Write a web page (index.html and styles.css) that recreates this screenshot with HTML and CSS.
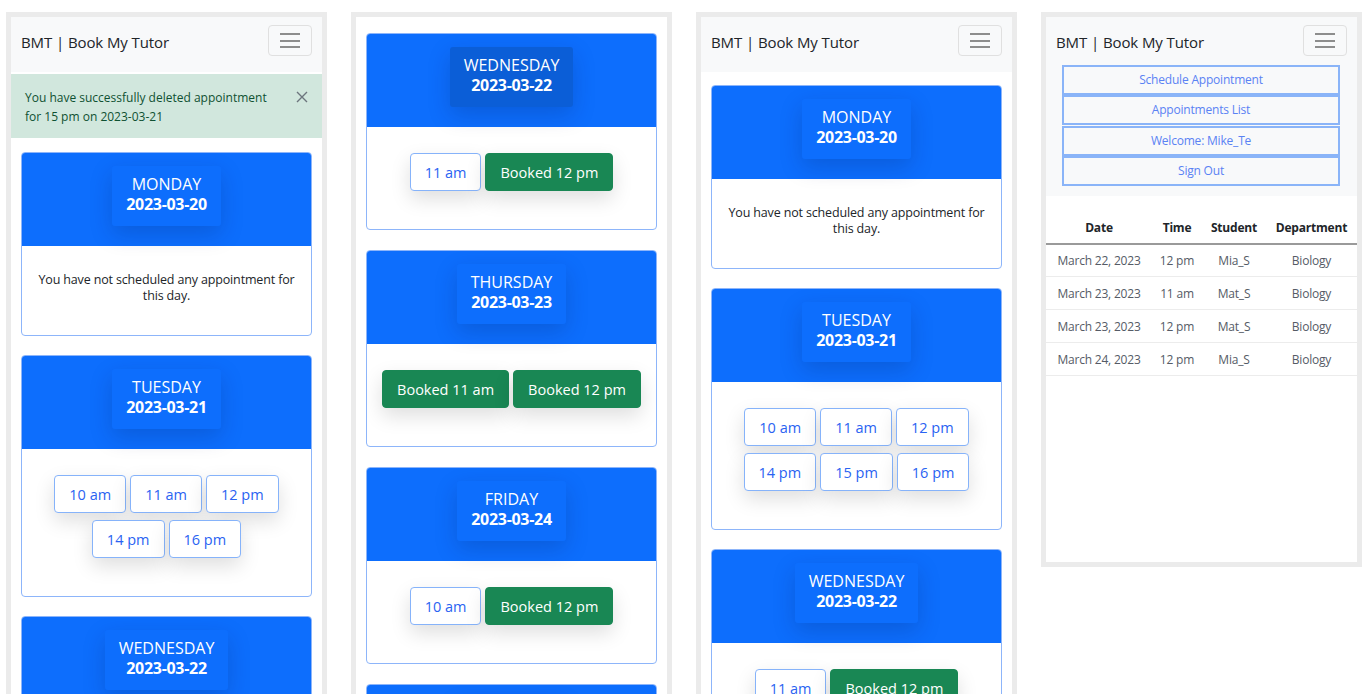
FILE: index.html
```html
<!DOCTYPE html>
<html lang="en">
<head>
<meta charset="utf-8">
<title>BMT | Book My Tutor</title>
<link rel="stylesheet" href="styles.css">
</head>
<body>
<div class="screens">

  <!-- Screen 1 -->
  <section class="phone">
    <nav class="navbar">
      <div class="nav-row">
        <span class="brand">BMT | Book My Tutor</span>
        <button class="toggler" aria-label="menu"><span></span><span></span><span></span></button>
      </div>
    </nav>
    <div class="alert">
      <p class="alert-text">You have successfully deleted appointment for 15 pm on 2023-03-21</p>
      <button class="alert-close" aria-label="close">
        <svg width="12" height="12" viewBox="0 0 12 12"><path d="M1 1 L11 11 M11 1 L1 11" stroke="#6c757d" stroke-width="1.4" fill="none"/></svg>
      </button>
    </div>
    <div class="cards">
      <div class="day-card">
        <div class="day-head"><div class="day-label"><div class="day-name">MONDAY</div><div class="day-date">2023-03-20</div></div></div>
        <div class="day-body empty"><p>You have not scheduled any appointment for this day.</p></div>
      </div>
      <div class="day-card">
        <div class="day-head"><div class="day-label"><div class="day-name">TUESDAY</div><div class="day-date">2023-03-21</div></div></div>
        <div class="day-body">
          <div class="slots">
            <button class="slot">10 am</button><button class="slot">11 am</button><button class="slot">12 pm</button><button class="slot">14 pm</button><button class="slot">16 pm</button>
          </div>
        </div>
      </div>
      <div class="day-card">
        <div class="day-head"><div class="day-label"><div class="day-name">WEDNESDAY</div><div class="day-date">2023-03-22</div></div></div>
        <div class="day-body">
          <div class="slots"><button class="slot">11 am</button><button class="slot booked">Booked 12 pm</button></div>
        </div>
      </div>
    </div>
  </section>

  <!-- Screen 2 -->
  <section class="phone">
    <div class="cards cards-top">
      <div class="day-card">
        <div class="day-head"><div class="day-label active"><div class="day-name">WEDNESDAY</div><div class="day-date">2023-03-22</div></div></div>
        <div class="day-body">
          <div class="slots"><button class="slot">11 am</button><button class="slot booked">Booked 12 pm</button></div>
        </div>
      </div>
      <div class="day-card">
        <div class="day-head"><div class="day-label"><div class="day-name">THURSDAY</div><div class="day-date">2023-03-23</div></div></div>
        <div class="day-body">
          <div class="slots"><button class="slot booked">Booked 11 am</button><button class="slot booked">Booked 12 pm</button></div>
        </div>
      </div>
      <div class="day-card">
        <div class="day-head"><div class="day-label"><div class="day-name">FRIDAY</div><div class="day-date">2023-03-24</div></div></div>
        <div class="day-body">
          <div class="slots"><button class="slot">10 am</button><button class="slot booked">Booked 12 pm</button></div>
        </div>
      </div>
      <div class="day-card">
        <div class="day-head"><div class="day-label"><div class="day-name">SATURDAY</div><div class="day-date">2023-03-25</div></div></div>
      </div>
    </div>
  </section>

  <!-- Screen 3 -->
  <section class="phone">
    <nav class="navbar">
      <div class="nav-row">
        <span class="brand">BMT | Book My Tutor</span>
        <button class="toggler" aria-label="menu"><span></span><span></span><span></span></button>
      </div>
    </nav>
    <div class="cards cards-nav">
      <div class="day-card">
        <div class="day-head"><div class="day-label"><div class="day-name">MONDAY</div><div class="day-date">2023-03-20</div></div></div>
        <div class="day-body empty"><p>You have not scheduled any appointment for this day.</p></div>
      </div>
      <div class="day-card">
        <div class="day-head"><div class="day-label"><div class="day-name">TUESDAY</div><div class="day-date">2023-03-21</div></div></div>
        <div class="day-body">
          <div class="slots">
            <button class="slot">10 am</button><button class="slot">11 am</button><button class="slot">12 pm</button><button class="slot">14 pm</button><button class="slot">15 pm</button><button class="slot">16 pm</button>
          </div>
        </div>
      </div>
      <div class="day-card">
        <div class="day-head"><div class="day-label"><div class="day-name">WEDNESDAY</div><div class="day-date">2023-03-22</div></div></div>
        <div class="day-body">
          <div class="slots"><button class="slot">11 am</button><button class="slot booked">Booked 12 pm</button></div>
        </div>
      </div>
    </div>
  </section>

  <!-- Screen 4 -->
  <section class="phone phone-short">
    <nav class="navbar navbar-open">
      <div class="nav-row">
        <span class="brand">BMT | Book My Tutor</span>
        <button class="toggler" aria-label="menu"><span></span><span></span><span></span></button>
      </div>
      <div class="menu">
        <a class="menu-item">Schedule Appointment</a>
        <a class="menu-item">Appointments List</a>
        <a class="menu-item">Welcome: Mike_Te</a>
        <a class="menu-item">Sign Out</a>
      </div>
    </nav>
    <table class="appts">
      <colgroup><col class="c-date"><col class="c-time"><col class="c-student"><col class="c-dept"></colgroup>
      <thead><tr><th>Date</th><th>Time</th><th>Student</th><th>Department</th></tr></thead>
      <tbody>
        <tr><td>March 22, 2023</td><td>12 pm</td><td>Mia_S</td><td>Biology</td></tr>
        <tr><td>March 23, 2023</td><td>11 am</td><td>Mat_S</td><td>Biology</td></tr>
        <tr><td>March 23, 2023</td><td>12 pm</td><td>Mat_S</td><td>Biology</td></tr>
        <tr><td>March 24, 2023</td><td>12 pm</td><td>Mia_S</td><td>Biology</td></tr>
      </tbody>
    </table>
  </section>

</div>
</body>
</html>
```

FILE: styles.css
```css
* { box-sizing: border-box; }

html, body {
  margin: 0;
  height: 694px;
  overflow: hidden;
  background: #ffffff;
  font-family: "Open Sans", "Noto Sans", "DejaVu Sans", sans-serif;
  color: #212529;
}

.screens {
  display: flex;
  align-items: flex-start;
  gap: 24px;
  padding: 12px 0 0 6px;
}

.phone {
  flex: none;
  width: 321px;
  height: 720px;
  border: 5px solid #ebebeb;
  background: #ffffff;
  overflow: hidden;
}

.phone-short {
  height: 555px;
}

/* navbar */
.navbar {
  background: #f8f9fa;
  padding: 8px 10px 0 10px;
  height: 55px;
}

.navbar-open {
  height: auto;
  padding-bottom: 10px;
}

.nav-row {
  display: flex;
  justify-content: space-between;
  align-items: center;
}

.brand {
  font-size: 15px;
  color: #212529;
  padding-top: 3px;
  letter-spacing: -0.1px;
}

.toggler {
  width: 44px;
  height: 31px;
  border: 1px solid #e0e0e0;
  border-radius: 4px;
  background: transparent;
  display: flex;
  flex-direction: column;
  align-items: center;
  justify-content: center;
  gap: 4.5px;
  padding: 0;
}

.toggler span {
  display: block;
  width: 20px;
  height: 2px;
  background: #8d8d8d;
}

.menu {
  margin: 9px 7px 0 6px;
  display: flex;
  flex-direction: column;
}

.menu-item {
  display: block;
  height: 30px;
  line-height: 26px;
  border: 2px solid #8ab4f8;
  text-align: center;
  font-size: 12px;
  color: #5a82f4;
  background: #f8f9fa;
  letter-spacing: -0.2px;
}

.menu-item + .menu-item {
  margin-top: 0.3px;
}

/* alert */
.alert {
  margin-top: 2px;
  background: #d1e7dd;
  padding: 14px 14px 12px 14px;
  display: flex;
  align-items: flex-start;
  gap: 22px;
}

.alert-text {
  margin: 0;
  flex: 1;
  font-size: 12px;
  line-height: 19px;
  color: #0f5132;
}

.alert-close {
  border: 0;
  background: transparent;
  padding: 0;
  width: 12px;
  height: 12px;
  margin-top: 3px;
  display: flex;
}

/* cards */
.cards {
  padding: 14px 10px 0 10px;
  display: flex;
  flex-direction: column;
  gap: 19px;
}

.cards-top { padding-top: 16px; gap: 20px; }
.cards-nav { padding-top: 13px; }

.day-card {
  border: 1px solid #8db5fa;
  border-radius: 4px;
  background: #ffffff;
  overflow: hidden;
}

.day-head {
  background: #0d6efd;
  padding: 13px 0 20px;
  display: flex;
  justify-content: center;
}

.day-label {
  background: #0d6efd;
  border-radius: 3px;
  padding: 8px 14px 12px;
  text-align: center;
  color: #ffffff;
  line-height: 20px;
  box-shadow: 0 8px 22px rgba(0, 30, 100, 0.22);
}

.day-label.active {
  background: #0b5ed7;
}

.day-name {
  font-size: 16px;
  letter-spacing: 0;
}

.day-date {
  font-size: 16px;
  font-weight: 700;
  letter-spacing: -0.3px;
}

.day-body {
  padding: 26px 10px 38px;
}

.day-body.empty {
  padding: 26px 10px 31px;
}

.day-body.empty p {
  margin: 0;
  text-align: center;
  font-size: 12.5px;
  line-height: 16px;
  color: #212529;
  letter-spacing: -0.15px;
}

.slots {
  display: flex;
  flex-wrap: wrap;
  justify-content: center;
  gap: 7px 4px;
}

.slot {
  height: 38px;
  padding: 0 14px;
  border: 1px solid #86b3fa;
  border-radius: 4px;
  background: #ffffff;
  color: #2a63f2;
  font-family: "Open Sans", "Noto Sans", sans-serif;
  font-size: 14.5px;
  box-shadow: 0 8px 20px rgba(0, 0, 0, 0.13);
}

.slot.booked {
  background: #198754;
  border-color: #198754;
  color: #ffffff;
}

/* table */
.appts {
  margin-top: 17px;
  width: 100%;
  border-collapse: collapse;
  table-layout: fixed;
  font-size: 12px;
}

.c-date { width: 106px; }
.c-time { width: 50px; }
.c-student { width: 64px; }
.c-dept { width: 91px; }

.appts th {
  font-weight: 700;
  color: #212529;
  height: 31px;
  border-bottom: 2px solid #9a9a9a;
  text-align: center;
  padding: 0;
  white-space: nowrap;
  letter-spacing: -0.2px;
}

.appts td {
  height: 33px;
  border-bottom: 1px solid #ececec;
  text-align: center;
  color: #555b66;
  padding: 0;
  white-space: nowrap;
  letter-spacing: -0.2px;
}
```
